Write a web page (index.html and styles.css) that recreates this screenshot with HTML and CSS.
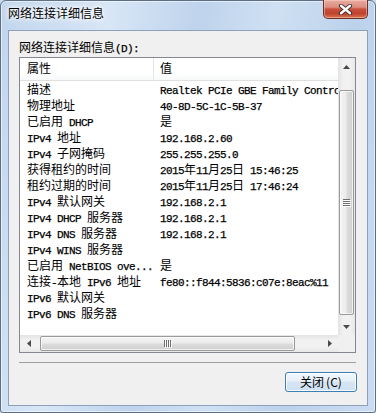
FILE: index.html
```html
<!DOCTYPE html>
<html lang="zh-CN">
<head>
<meta charset="utf-8">
<title>网络连接详细信息</title>
<link rel="stylesheet" href="styles.css">
</head>
<body>
<div class="window">
  <div class="titlebar">
    <span class="title">网络连接详细信息</span>
    <div class="close">
      <svg width="15" height="11" viewBox="0 0 15 11"><path d="M3 1.8 L12 9.2 M12 1.8 L3 9.2" stroke="#3b2a2a" stroke-width="4.2" stroke-linecap="round" fill="none"/><path d="M3 1.8 L12 9.2 M12 1.8 L3 9.2" stroke="#ffffff" stroke-width="2.4" stroke-linecap="round" fill="none"/></svg>
    </div>
  </div>
  <div class="client">
    <div class="label">网络连接详细信息<span class="m">(D):</span></div>
    <div class="list">
      <div class="view">
        <div class="header"><div class="hk">属性</div><div class="hv">值</div></div>
        <div class="row"><div class="k">描述</div><div class="v"><span class="m">Realtek PCIe GBE Family Controller</span></div></div>
        <div class="row"><div class="k">物理地址</div><div class="v"><span class="m">40-8D-5C-1C-5B-37</span></div></div>
        <div class="row"><div class="k">已启用<span class="m"> DHCP</span></div><div class="v">是</div></div>
        <div class="row"><div class="k"><span class="m">IPv4 </span>地址</div><div class="v"><span class="m">192.168.2.60</span></div></div>
        <div class="row"><div class="k"><span class="m">IPv4 </span>子网掩码</div><div class="v"><span class="m">255.255.255.0</span></div></div>
        <div class="row"><div class="k">获得租约的时间</div><div class="v"><span class="m">2015</span>年<span class="m">11</span>月<span class="m">25</span>日<span class="m"> 15:46:25</span></div></div>
        <div class="row"><div class="k">租约过期的时间</div><div class="v"><span class="m">2015</span>年<span class="m">11</span>月<span class="m">25</span>日<span class="m"> 17:46:24</span></div></div>
        <div class="row"><div class="k"><span class="m">IPv4 </span>默认网关</div><div class="v"><span class="m">192.168.2.1</span></div></div>
        <div class="row"><div class="k"><span class="m">IPv4 DHCP </span>服务器</div><div class="v"><span class="m">192.168.2.1</span></div></div>
        <div class="row"><div class="k"><span class="m">IPv4 DNS </span>服务器</div><div class="v"><span class="m">192.168.2.1</span></div></div>
        <div class="row"><div class="k"><span class="m">IPv4 WINS </span>服务器</div><div class="v"></div></div>
        <div class="row"><div class="k">已启用<span class="m"> NetBIOS ove...</span></div><div class="v">是</div></div>
        <div class="row"><div class="k">连接<span class="m">-</span>本地<span class="m"> IPv6 </span>地址</div><div class="v"><span class="m">fe80::f844:5836:c07e:8eac%11</span></div></div>
        <div class="row"><div class="k"><span class="m">IPv6 </span>默认网关</div><div class="v"></div></div>
        <div class="row"><div class="k"><span class="m">IPv6 DNS </span>服务器</div><div class="v"></div></div>
      </div>
      <div class="vscroll">
        <div class="arrow"><svg width="7" height="4" viewBox="0 0 7 4"><path d="M0 4 L3.5 0 L7 4 Z" fill="#4a4a4a"/></svg></div>
        <div class="vthumb">
          <svg width="8" height="8" viewBox="0 0 8 8"><path d="M0 0.5H7 M0 2.5H7 M0 4.5H7 M0 6.5H7" stroke="#6e6e6e" stroke-width="1"/><path d="M1 1.5H8 M1 3.5H8 M1 5.5H8 M1 7.5H8" stroke="#ffffff" stroke-width="1"/></svg>
        </div>
        <div class="arrow"><svg width="7" height="4" viewBox="0 0 7 4"><path d="M0 0 L3.5 4 L7 0 Z" fill="#4a4a4a"/></svg></div>
      </div>
      <div class="hscroll">
        <div class="arrow"><svg width="4" height="7" viewBox="0 0 4 7"><path d="M4 0 L0 3.5 L4 7 Z" fill="#4a4a4a"/></svg></div>
        <div class="hthumb">
          <svg width="8" height="8" viewBox="0 0 8 8"><path d="M0.5 0V7 M2.5 0V7 M4.5 0V7 M6.5 0V7" stroke="#6e6e6e" stroke-width="1"/><path d="M1.5 1V8 M3.5 1V8 M5.5 1V8 M7.5 1V8" stroke="#ffffff" stroke-width="1"/></svg>
        </div>
        <div class="hspace"></div>
        <div class="arrow"><svg width="4" height="7" viewBox="0 0 4 7"><path d="M0 0 L4 3.5 L0 7 Z" fill="#4a4a4a"/></svg></div>
      </div>
      <div class="corner"></div>
    </div>
    <div class="sep"></div>
    <div class="buttons"><button class="btn" type="button">关闭<span class="bm">(C)</span></button></div>
  </div>
</div>
</body>
</html>
```

FILE: styles.css
```css
* { box-sizing: border-box; }
html, body { margin: 0; padding: 0; }
body {
  width: 376px;
  height: 413px;
  overflow: hidden;
  font-family: "Noto Sans CJK SC", "Noto Sans", sans-serif;
  font-size: 12px;
  color: #000;
  background: #c9dbef;
}
.window {
  width: 376px;
  height: 413px;
  display: flex;
  flex-direction: column;
  padding: 0 7px 6px 7px;
  border: 1px solid #5d6f84;
  border-radius: 6px 6px 3px 3px;
  background: linear-gradient(100deg, #c0d5ed 0%, #d8e6f6 25%, #bed3ec 45%, #cfe0f3 62%, #bcd2eb 80%, #cadcf1 100%);
  box-shadow: inset 0 0 0 1px rgba(255,255,255,0.55);
}
.titlebar {
  height: 29px;
  flex: none;
  display: flex;
  justify-content: space-between;
  align-items: flex-start;
}
.title {
  margin-top: 4px;
  line-height: 16px;
  font-size: 12px;
  color: #000;
  text-shadow: 0 0 6px #fff, 0 0 3px #fff, 0 0 10px rgba(255,255,255,0.9);
}
.close {
  width: 45px;
  height: 19px;
  margin-top: -1px;
  border: 1px solid #6e2f27;
  border-top: none;
  border-radius: 0 0 5px 5px;
  background: linear-gradient(#e9aca0 0%, #dc8d7f 40%, #c9513c 50%, #c0432f 75%, #d9734f 100%);
  box-shadow: inset 0 0 0 1px rgba(255,220,210,0.45);
  display: flex;
  align-items: center;
  justify-content: center;
}
.client {
  flex: 1;
  display: flex;
  flex-direction: column;
  border: 1px solid #8da2ba;
  background: #f0f0f0;
  padding: 9px 11px 13px 10px;
}
.m {
  font-family: "Liberation Mono", monospace;
  font-size: 11px;
  letter-spacing: -0.6px;
  -webkit-text-stroke: 0.25px #000;
}
.label {
  height: 14px;
  line-height: 14px;
  margin-bottom: 3px;
  white-space: nowrap;
}
.list {
  width: 337px;
  height: 296px;
  flex: none;
  border: 1px solid #828790;
  background: #fff;
  display: grid;
  grid-template-columns: 318px 17px;
  grid-template-rows: 277px 17px;
}
.view {
  overflow: hidden;
  white-space: nowrap;
}
.header {
  height: 23px;
  display: flex;
  border-bottom: 1px solid #e0e0e0;
  background: linear-gradient(#ffffff 0%, #ffffff 70%, #f7f8fa 100%);
  line-height: 20px;
}
.hk {
  width: 134px;
  flex: none;
  padding-left: 7px;
  border-right: 1px solid #e5e5e5;
}
.hv {
  padding-left: 6px;
}
.row {
  display: flex;
  height: 16px;
  line-height: 16px;
}
.k {
  width: 134px;
  flex: none;
  padding-left: 7px;
  overflow: hidden;
}
.v {
  padding-left: 6px;
}
.vscroll {
  display: flex;
  flex-direction: column;
  background: linear-gradient(90deg, #e3e3e3 0%, #f1f1f1 30%, #f1f1f1 70%, #e8e8e8 100%);
}
.hscroll {
  display: flex;
  background: linear-gradient(#e3e3e3 0%, #f1f1f1 30%, #f1f1f1 70%, #e8e8e8 100%);
}
.arrow {
  width: 17px;
  height: 17px;
  flex: none;
  display: flex;
  align-items: center;
  justify-content: center;
}
.vthumb {
  height: 225px;
  margin: 15px 1px 3px 1px;
  border: 1px solid #9a9a9a;
  border-radius: 2px;
  background: linear-gradient(90deg, #f4f4f4 0%, #ececec 45%, #dcdcdc 55%, #cfcfcf 100%);
  box-shadow: inset 0 0 0 1px rgba(255,255,255,0.7);
  display: flex;
  align-items: center;
  justify-content: center;
}
.hthumb {
  width: 255px;
  flex: none;
  margin: 1px 0 1px 3px;
  border: 1px solid #9a9a9a;
  border-radius: 2px;
  background: linear-gradient(#f4f4f4 0%, #ececec 45%, #dcdcdc 55%, #cfcfcf 100%);
  box-shadow: inset 0 0 0 1px rgba(255,255,255,0.7);
  display: flex;
  align-items: center;
  justify-content: center;
}
.hspace { flex: 1; }
.corner { background: #f0f0f0; }
.sep {
  height: 1px;
  width: 337px;
  margin-top: 9px;
  background: #a0a0a0;
}
.buttons {
  margin-top: 9px;
  display: flex;
  justify-content: flex-end;
}
.btn {
  width: 72px;
  height: 20px;
  margin: 0 -1px 0 0;
  padding: 0;
  border: 1px solid #3c7fb1;
  border-radius: 3px;
  background: linear-gradient(#f2f7fc 0%, #e6eff8 45%, #d6e5f3 50%, #cfe1f2 100%);
  box-shadow: inset 0 0 0 1px rgba(255,255,255,0.8);
  font-family: "Noto Sans CJK SC", sans-serif;
  font-size: 12px;
  line-height: 16px;
  color: #000;
}
.bm { margin-left: 2px; }
```
